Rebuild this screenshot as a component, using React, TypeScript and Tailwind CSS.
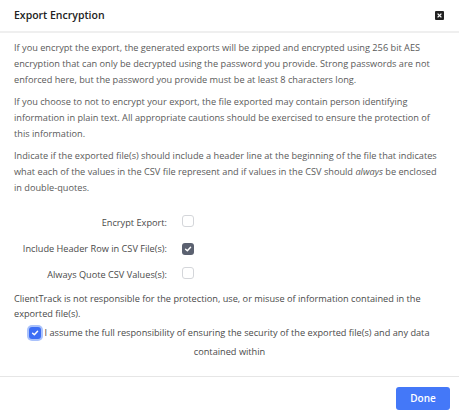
import React, { useState } from "react";

const fontStack = { fontFamily: '"Open Sans", "Noto Sans", Arial, sans-serif' };

const CheckBox = ({ checked, onChange, variant }: { checked: boolean; onChange: () => void; variant: "gray" | "blue" }) => {
  if (!checked) {
    return (
      <button
        onClick={onChange}
        className="w-[12px] h-[12px] rounded-[3px] border border-[#d4d6da] bg-white shrink-0"
      />
    );
  }
  const fill = variant === "blue" ? "bg-[#3d6ef5] ring-2 ring-[#aac2fb]" : "bg-[#5b6170]";
  return (
    <button
      onClick={onChange}
      className={`w-[12px] h-[12px] rounded-[3px] ${fill} flex items-center justify-center shrink-0`}
    >
      <svg width="8" height="8" viewBox="0 0 10 10">
        <path d="M2 5.2 L4.2 7.3 L8.2 2.8" fill="none" stroke="white" strokeWidth="1.8" strokeLinecap="round" strokeLinejoin="round" />
      </svg>
    </button>
  );
};

export default function App() {
  const [encrypt, setEncrypt] = useState(false);
  const [header, setHeader] = useState(true);
  const [quote, setQuote] = useState(false);
  const [assume, setAssume] = useState(true);

  // label + checkbox rows
  const rows = [
    { label: "Encrypt Export:", value: encrypt, set: () => setEncrypt(!encrypt) },
    { label: "Include Header Row in CSV File(s):", value: header, set: () => setHeader(!header) },
    { label: "Always Quote CSV Values(s):", value: quote, set: () => setQuote(!quote) },
  ];

  return (
    <div className="w-[459px] h-[415px] bg-white flex flex-col" style={fontStack}>
      {/* Header */}
      <div className="h-[33px] px-[14px] flex items-center justify-between border-b-2 border-[#efefef]">
        <span className="text-[10.5px] font-semibold text-[#222]">Export Encryption</span>
        <button className="w-[9px] h-[9px] bg-[#222] rounded-[1px] flex items-center justify-center mr-[1px]">
          <svg width="7" height="7" viewBox="0 0 7 7">
            <path d="M1.6 1.6 L5.4 5.4 M5.4 1.6 L1.6 5.4" stroke="white" strokeWidth="1.3" />
          </svg>
        </button>
      </div>

      {/* Body */}
      <div className="flex-1 px-[14px] pt-[7px] text-[9.2px] leading-[16px] text-[#5a5a5a]">
        <p className="mb-[6px]">
          If you encrypt the export, the generated exports will be zipped and encrypted using 256 bit AES
          encryption that can only be decrypted using the password you provide. Strong passwords are not
          enforced here, but the password you provide must be at least 8 characters long.
        </p>
        <p className="mb-[6px]">
          If you choose to not to encrypt your export, the file exported may contain person identifying
          information in plain text. All appropriate cautions should be exercised to ensure the protection of
          this information.
        </p>
        <p>
          Indicate if the exported file(s) should include a header line at the beginning of the file that indicates
          what each of the values in the CSV file represent and if values in the CSV should <i>always</i> be enclosed
          in double-quotes.
        </p>

        <div className="mt-[19px] flex flex-col gap-[10px]">
          {rows.map((r, i) => (
            <div key={i} className="flex items-center h-[16px]">
              <span className="w-[153px] text-right text-[#4a4a4a]">{r.label}</span>
              <span className="ml-[15px]">
                <CheckBox checked={r.value} onChange={r.set} variant="gray" />
              </span>
            </div>
          ))}
        </div>

        <p className="mt-[8px] text-[#4a4a4a] leading-[15px]">
          ClientTrack is not responsible for the protection, use, or misuse of information contained in the
          exported file(s).
        </p>
        <div className="text-center leading-[19px] text-[#4a4a4a] mt-[2px]">
          <span className="inline-flex align-middle mr-[3px] relative top-[-1px]">
            <CheckBox checked={assume} onChange={() => setAssume(!assume)} variant="blue" />
          </span>
          I assume the full responsibility of ensuring the security of the exported file(s) and any data
          contained within
        </div>
      </div>

      {/* Footer */}
      <div className="border-t border-[#e6e6e6] h-[39px] flex items-start justify-end pt-[10px] px-[9px]">
        <button className="w-[54px] h-[23px] rounded-[3px] bg-[#4478f8] text-white text-[10px] font-semibold">
          Done
        </button>
      </div>
    </div>
  );
}
